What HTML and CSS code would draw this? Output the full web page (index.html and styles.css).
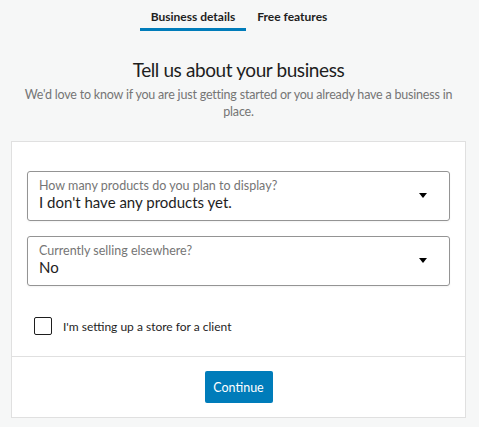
FILE: index.html
```html
<!DOCTYPE html>
<html lang="en">
<head>
<meta charset="utf-8">
<title>Business details</title>
<link rel="stylesheet" href="styles.css">
</head>
<body>
<div class="page">
  <nav class="tabs">
    <button class="tab tab--active">Business details</button>
    <button class="tab">Free features</button>
  </nav>
  <header class="intro">
    <h1 class="intro__title">Tell us about your business</h1>
    <p class="intro__text">We'd love to know if you are just getting started or you already have a business in place.</p>
  </header>
  <section class="card">
    <div class="card__body">
      <div class="select">
        <div class="select__text">
          <span class="select__label">How many products do you plan to display?</span>
          <span class="select__value">I don't have any products yet.</span>
        </div>
        <span class="select__arrow"></span>
      </div>
      <div class="select">
        <div class="select__text">
          <span class="select__label">Currently selling elsewhere?</span>
          <span class="select__value">No</span>
        </div>
        <span class="select__arrow"></span>
      </div>
      <label class="check">
        <span class="check__box"></span>
        <span class="check__label">I'm setting up a store for a client</span>
      </label>
    </div>
    <div class="card__footer">
      <button class="btn-primary">Continue</button>
    </div>
  </section>
</div>
</body>
</html>
```

FILE: styles.css
```css
* { box-sizing: border-box; }
html, body {
  margin: 0;
  padding: 0;
  background: #f6f7f7;
  font-family: "Lato", "Liberation Sans", sans-serif;
  color: #1e1e1e;
}
.page {
  padding: 0 13px 0 11px;
}
.tabs {
  display: flex;
  justify-content: center;
  height: 31px;
  padding-left: 1px;
}
.tab {
  border: none;
  background: none;
  font-family: inherit;
  font-size: 12px;
  font-weight: 700;
  color: #1e1e1e;
  padding: 6px 11px 0;
  height: 31px;
  line-height: 22px;
  border-bottom: 3px solid transparent;
}
.tab--active {
  border-bottom-color: #007cba;
}
.intro {
  text-align: center;
  padding: 27px 6px 0;
}
.intro__title {
  margin: 0;
  font-size: 19px;
  letter-spacing: -0.4px;
  font-weight: 400;
  line-height: 24px;
  color: #1e1e1e;
}
.intro__text {
  margin: 4px 0 0;
  font-size: 12.5px;
  letter-spacing: -0.2px;
  line-height: 17px;
  color: #757575;
}
.card {
  margin-top: 21px;
  background: #fff;
  border: 1px solid #e0e0e0;
}
.card__body {
  padding: 29px 15px 21px;
  display: flex;
  flex-direction: column;
  gap: 15px;
}
.select {
  height: 50px;
  border: 1px solid #949494;
  border-radius: 3px;
  display: flex;
  align-items: center;
  padding: 0 22px 2px 11px;
  box-shadow: 0 1px 2px rgba(0,0,0,0.05);
}
.select__text {
  flex: 1;
  display: flex;
  flex-direction: column;
}
.select__label {
  font-size: 12.5px;
  line-height: 14px;
  color: #757575;
}
.select__value {
  font-size: 15px;
  line-height: 18px;
  color: #1e1e1e;
}
.select__arrow {
  width: 0;
  height: 0;
  border-left: 4px solid transparent;
  border-right: 4px solid transparent;
  border-top: 5px solid #000;
}
.check {
  display: flex;
  align-items: center;
  gap: 11px;
  margin-top: 16px;
  padding-left: 7px;
}
.check__box {
  width: 18px;
  height: 18px;
  border: 1.5px solid #1e1e1e;
  border-radius: 2px;
  background: #fff;
}
.check__label {
  font-size: 12px;
  color: #1e1e1e;
}
.card__footer {
  border-top: 1px solid #e0e0e0;
  padding: 14px 0 14px;
  display: flex;
  justify-content: center;
}
.btn-primary {
  background: #007cba;
  color: #fff;
  border: none;
  border-radius: 2px;
  height: 32px;
  width: 68px;
  font-family: inherit;
  font-size: 12.5px;
  padding: 0;
}
```
